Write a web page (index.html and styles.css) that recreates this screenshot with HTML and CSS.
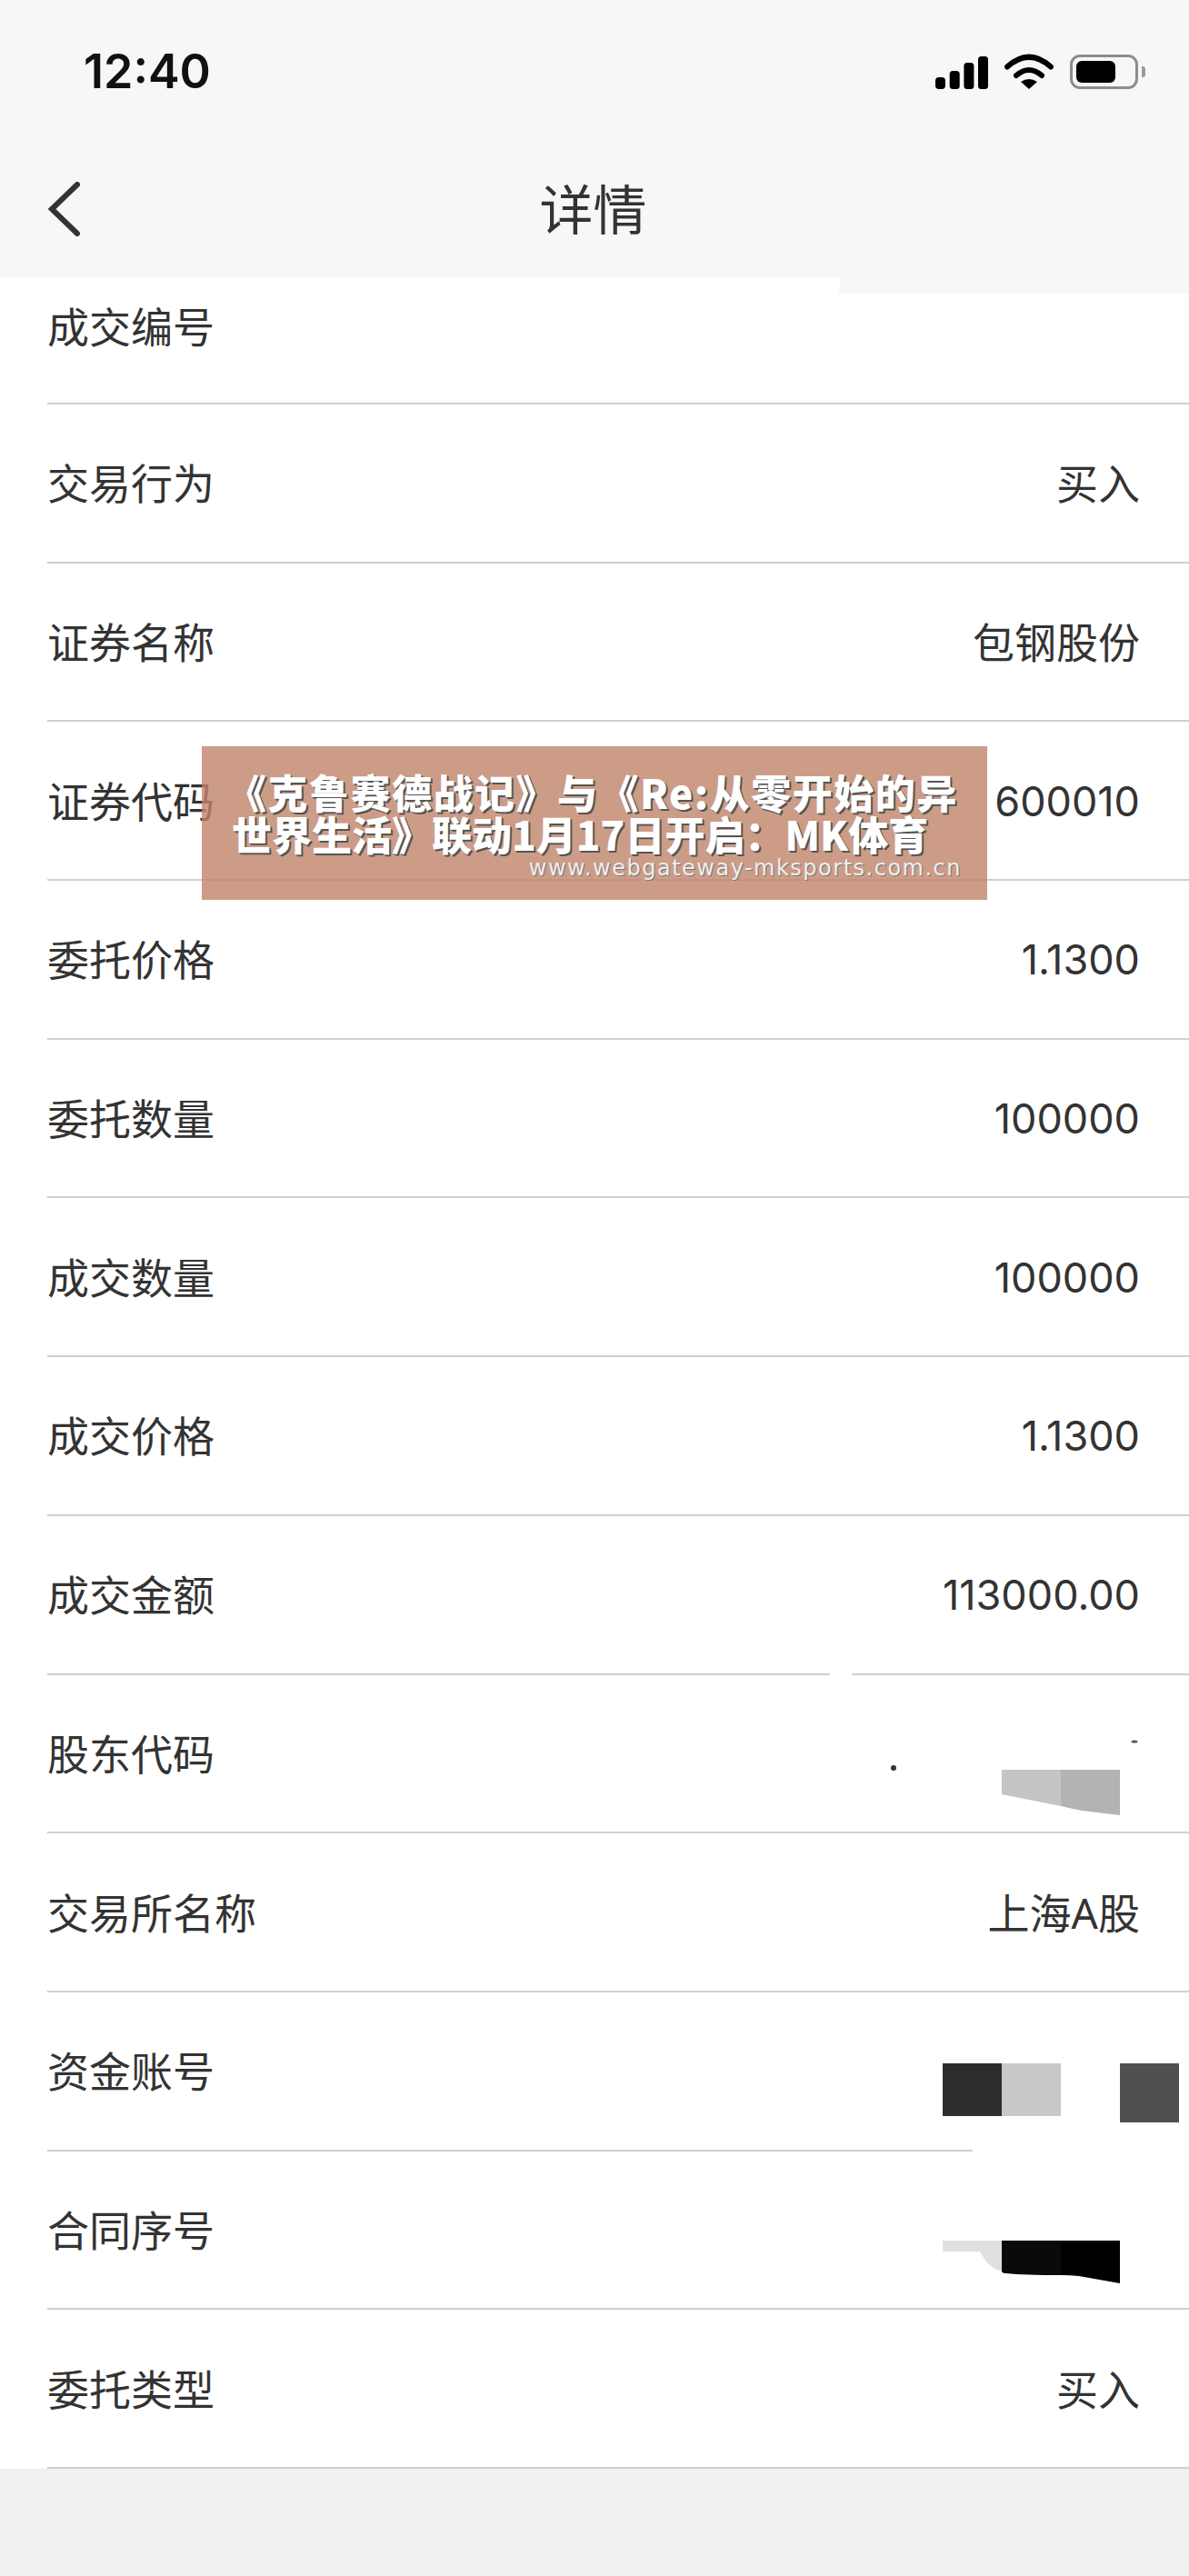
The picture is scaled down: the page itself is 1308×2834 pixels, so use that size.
FILE: index.html
```html
<!DOCTYPE html>
<html lang="zh-CN">
<head>
<meta charset="utf-8">
<title>详情</title>
<link rel="stylesheet" href="styles.css">
</head>
<body>
<div class="page">
  <header class="header">
    <div class="status">
      <span class="time">12:40</span>
      <div class="status-icons">
        <svg class="signal" width="58" height="36" viewBox="0 0 58 36"><rect x="0" y="23" width="11" height="13" rx="4" fill="#000"/><rect x="15.7" y="16" width="11" height="20" rx="3.5" fill="#000"/><rect x="31.4" y="7" width="11" height="29" rx="3.5" fill="#000"/><rect x="47" y="0" width="11" height="36" rx="3.5" fill="#000"/></svg>
        <svg class="wifi" width="54" height="39" viewBox="0 0 54 39"><path d="M3 14.5Q27-7 51 14.5" fill="none" stroke="#000" stroke-width="6" stroke-linecap="round"/><path d="M13 24Q27 12 41 24" fill="none" stroke="#000" stroke-width="6" stroke-linecap="round"/><path d="M18 31Q27 25 36 31L27 39Z" fill="#000"/></svg>
        <div class="battery"><div class="battery-level"></div></div>
        <div class="battery-nub"></div>
      </div>
    </div>
    <div class="nav">
      <svg class="back" width="36" height="60" viewBox="0 0 36 60"><path d="M33 3L5 30L33 57" fill="none" stroke="#333" stroke-width="6" stroke-linecap="round" stroke-linejoin="miter"/></svg>
      <h1 class="title">详情</h1>
    </div>
  </header>

  <main class="list">
    <div class="row row-clipped"><span>成交编号</span></div>
    <div class="row"><span>交易行为</span><span class="value">买入</span></div>
    <div class="row"><span>证券名称</span><span class="value">包钢股份</span></div>
    <div class="row"><span>证券代码</span><span class="value value-num">600010</span></div>
    <div class="row"><span>委托价格</span><span class="value value-num">1.1300</span></div>
    <div class="row"><span>委托数量</span><span class="value value-num">100000</span></div>
    <div class="row"><span>成交数量</span><span class="value value-num">100000</span></div>
    <div class="row"><span>成交价格</span><span class="value value-num">1.1300</span></div>
    <div class="row row-gap"><span>成交金额</span><span class="value value-num">113000.00</span></div>
    <div class="row"><span>股东代码</span>
      <svg class="mask mask-holder" width="290" height="100" viewBox="0 0 290 100">
        <polygon points="134,44 199,44 199,84 134,71" fill="#c4c4c4"/>
        <polygon points="199,44 264,44 264,94 222,89 199,84" fill="#b3b3b3"/>
        <circle cx="15" cy="42" r="3" fill="#333"/>
        <ellipse cx="280" cy="13" rx="3.5" ry="1.5" fill="#555"/>
      </svg>
    </div>
    <div class="row"><span>交易所名称</span><span class="value">上海A股</span></div>
    <div class="row row-short"><span>资金账号</span>
      <svg class="mask mask-account" width="260" height="65" viewBox="0 0 260 65">
        <rect x="0" y="0" width="65" height="58" fill="#2d2d2d"/>
        <rect x="65" y="0" width="65" height="58" fill="#c8c8c8"/>
        <rect x="195" y="0" width="65" height="65" fill="#505050"/>
      </svg>
    </div>
    <div class="row"><span>合同序号</span>
      <svg class="mask mask-contract" width="195" height="48" viewBox="0 0 195 48">
        <path d="M0 0H65V34Q50 30 41 12H0Z" fill="#e0e0e0"/>
        <path d="M65 0H130V38Q90 38 70 36Q66 36 65 34Z" fill="#0a0a0a"/>
        <path d="M130 0H195V47L150 39Q140 38 130 38Z" fill="#000"/>
      </svg>
    </div>
    <div class="row"><span>委托类型</span><span class="value">买入</span></div>
  </main>

  <aside class="banner">
    <div class="banner-line banner-line-first">《克鲁赛德战记》与《Re:从零开始的异</div>
    <div class="banner-line">世界生活》联动1月17日开启：MK体育</div>
    <div class="banner-url">www.webgateway-mksports.com.cn</div>
  </aside>
</div>
</body>
</html>
```
FILE: styles.css
```css
* { box-sizing: border-box; }
html, body { margin: 0; padding: 0; }
body {
  background: #f0f0f0;
  font-family: "Noto Sans", "Noto Sans CJK SC", sans-serif;
  color: #333;
}
.page { position: relative; width: 1308px; height: 2834px; overflow: hidden; }

.header { position: relative; height: 305px; background: #f7f7f7; z-index: 2; }
.header::after {
  content: "";
  position: absolute;
  top: 100%;
  left: 921px;
  right: 0;
  height: 18px;
  background: #f7f7f7;
  clip-path: polygon(5px 0, 100% 0, 100% 100%, 0 100%);
}
.status {
  height: 161px;
  padding: 52px 48px 0 92px;
  display: flex;
  justify-content: space-between;
  align-items: flex-start;
}
.time {
  font-family: Inter, "Noto Sans", sans-serif;
  font-size: 52px;
  font-weight: 600;
  line-height: 54px;
  color: #111;
}
.status-icons { display: flex; align-items: flex-end; padding-top: 7px; }
.signal { margin-right: 18px; display: block; }
.wifi { margin-right: 18px; display: block; }
.battery {
  width: 75px;
  height: 38px;
  border: 3px solid #8d8d8d;
  border-radius: 11px;
  padding: 4px;
}
.battery-level { width: 43px; height: 100%; background: #000; border-radius: 6px; }
.battery-nub {
  width: 4px;
  height: 12px;
  margin: 0 0 13px 4px;
  background: #9a9a9a;
  border-radius: 0 3px 3px 0;
}
.nav {
  position: relative;
  height: 144px;
  display: flex;
  align-items: flex-start;
  justify-content: center;
}
.back { position: absolute; left: 52px; top: 39px; display: block; }
.title {
  margin: 37px 3px 0 0;
  font-size: 59px;
  font-weight: 400;
  line-height: 64px;
  color: #333;
}

.list { background: #fff; }
.row {
  position: relative;
  height: 174.7px;
  margin-left: 52px;
  padding-right: 54px;
  border-bottom: 2px solid #cfcfcf;
  display: flex;
  align-items: center;
  justify-content: space-between;
  font-size: 46px;
  line-height: 60px;
  color: #333;
}
.row-clipped { height: 140px; padding-bottom: 30px; }
.row-gap::after {
  content: "";
  position: absolute;
  right: 371px;
  bottom: -2px;
  width: 24px;
  height: 2px;
  background: #fff;
}
.row-short { border-bottom-color: transparent; }
.row-short::after {
  content: "";
  position: absolute;
  left: 0;
  bottom: -2px;
  width: 1018px;
  height: 2px;
  background: #cfcfcf;
}
.value-num {
  font-family: Inter, "Noto Sans", sans-serif;
  font-size: 45px;
  padding-top: 2px;
}
.mask { position: absolute; display: block; }
.mask-holder { top: 60px; right: 50px; }
.mask-account { top: 78px; right: 11px; }
.mask-contract { top: 98px; right: 76px; }

.banner {
  position: absolute;
  left: 222px;
  top: 821px;
  width: 864px;
  height: 169px;
  padding: 27px 0 0 33px;
  background: rgba(192, 131, 104, 0.8);
  z-index: 3;
  color: #fff;
  font-family: "Noto Sans CJK SC", sans-serif;
  font-weight: 900;
  font-size: 44px;
  line-height: 46px;
  white-space: nowrap;
  text-shadow: 2px 2px 0 #555, 1px 1px 0 #555;
}
.banner-line-first { margin-left: -6px; letter-spacing: 1.5px; }
.banner-url {
  margin: 3px 28px 0 0;
  text-align: right;
  font-family: "DejaVu Sans", sans-serif;
  font-weight: 400;
  font-size: 24px;
  line-height: 24px;
  letter-spacing: 1.5px;
  color: #eee;
  text-shadow: 1px 1px 0 #777;
}
```
